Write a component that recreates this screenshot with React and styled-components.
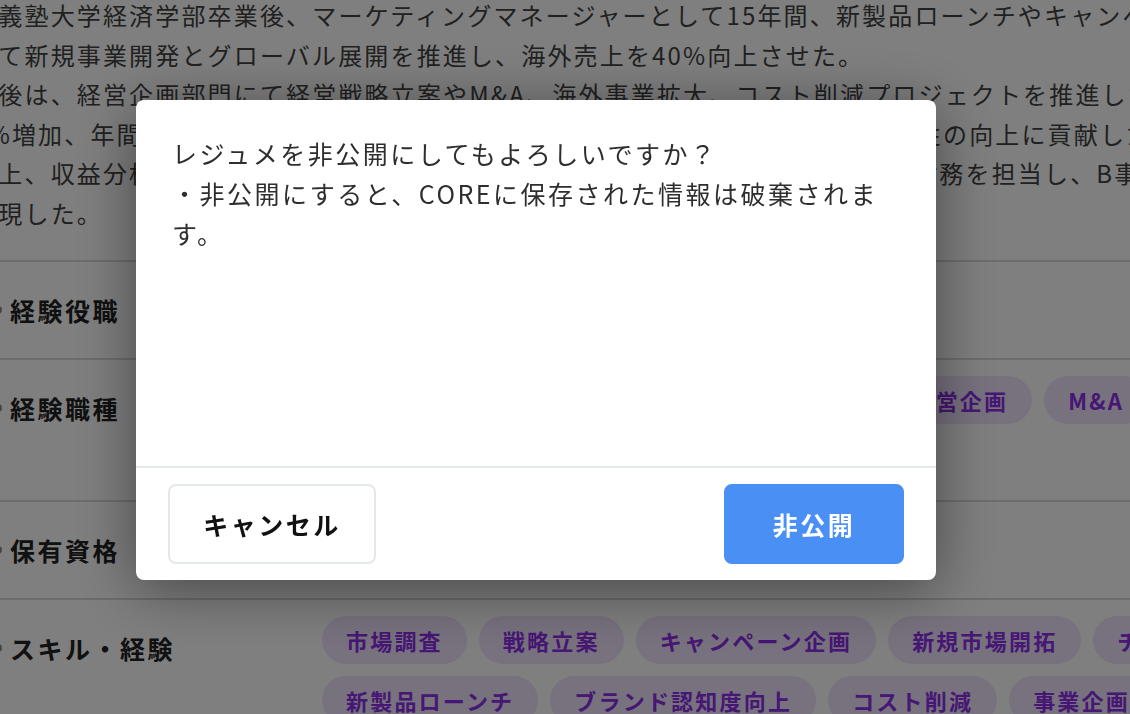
import React from "react";
import styled, { createGlobalStyle } from "styled-components";

const GlobalStyle = createGlobalStyle`
  html, body {
    margin: 0;
    padding: 0;
  }
  body {
    font-family: "Noto Sans CJK JP", "Noto Sans", sans-serif;
    background: #fff;
    color: #444;
    overflow: hidden;
  }
`;

const Page = styled.div`
  width: 100vw;
  height: 100vh;
  overflow: hidden;
`;

const Content = styled.div`
  width: 1500px;
  margin: -5px 0 0 -54px;
`;

const Summary = styled.p`
  margin: 0;
  padding-bottom: 27px;
  font-size: 24px;
  line-height: 39.6px;
  letter-spacing: 0.09em;
  white-space: nowrap;
  color: #424242;
`;

const Row = styled.section`
  display: grid;
  grid-template-columns: 376px 1060px;
  padding: 16px 0;
  border-top: 2px solid #d9d9d9;
`;

const LabelCell = styled.div`
  display: flex;
  align-items: center;
  gap: 8px;
  height: 64px;
  padding-left: 48px;
`;

const Dot = styled.span`
  width: 8px;
  height: 8px;
  border-radius: 50%;
  background: #8a8a8a;
`;

const Label = styled.h3`
  margin: 0;
  font-size: 25px;
  font-weight: 700;
  letter-spacing: 0.1em;
  color: #222;
`;

const Tags = styled.div`
  display: flex;
  flex-wrap: wrap;
  align-content: flex-start;
  gap: 12px;
`;

const Tag = styled.span`
  display: inline-flex;
  align-items: center;
  height: 48px;
  padding: 0 24px;
  border-radius: 24px;
  background: #efe4fc;
  color: #8c2ee8;
  font-size: 22px;
  font-weight: 700;
  letter-spacing: 0.1em;
  white-space: nowrap;
`;

const Overlay = styled.div`
  position: fixed;
  inset: 0;
  display: flex;
  align-items: flex-start;
  padding: 100px 0 0 136px;
  background: rgba(0, 0, 0, 0.5);
`;

const Modal = styled.div`
  display: flex;
  flex-direction: column;
  width: 800px;
  height: 480px;
  background: #fff;
  border-radius: 8px;
  box-shadow: 0 10px 60px rgba(0, 0, 0, 0.45);
  overflow: hidden;
`;

const ModalBody = styled.div`
  flex: 1;
  padding: 33px 36px;
  font-size: 25px;
  line-height: 40px;
  letter-spacing: 0.1em;
  color: #2e2e2e;
`;

const ModalFooter = styled.div`
  display: flex;
  justify-content: space-between;
  align-items: center;
  padding: 16px 32px;
  border-top: 2px solid #e3e8ee;
`;

const Button = styled.button`
  height: 80px;
  width: ${(p) => (p.$primary ? "180px" : "208px")};
  border-radius: 8px;
  border: 2px solid ${(p) => (p.$primary ? "#4a90f4" : "#e3e8ee")};
  background: ${(p) => (p.$primary ? "#4a90f4" : "#fff")};
  color: ${(p) => (p.$primary ? "#fff" : "#111")};
  font-family: inherit;
  font-size: 25px;
  font-weight: 700;
  letter-spacing: 0.1em;
  cursor: pointer;
`;

const summaryLines = [
  "慶應義塾大学経済学部卒業後、マーケティングマネージャーとして15年間、新製品ローンチやキャンペーン企画を担当。",
  "社にて新規事業開発とグローバル展開を推進し、海外売上を40%向上させた。",
  "その後は、経営企画部門にて経営戦略立案やM&A、海外事業拡大、コスト削減プロジェクトを推進した。",
  "を5%増加、年間コスト2億円の削減を達成。業務効率化を推進し、組織全体の生産性の向上に貢献した。",
  "率向上、収益分析の仕組みを構築した。さらに、子会社の経営管理や予算策定等の財務を担当し、B事業の黒字化",
  "を実現した。",
];

const rows = [
  { label: "経験役職", tags: [] },
  {
    label: "経験職種",
    tags: ["マーケティング", "事業開発", "広報・宣伝", "経営企画", "M&A", "海外事業", "予算管理"],
  },
  { label: "保有資格", tags: [] },
  {
    label: "スキル・経験",
    tags: [
      "市場調査",
      "戦略立案",
      "キャンペーン企画",
      "新規市場開拓",
      "チームマネジメント",
      "新製品ローンチ",
      "ブランド認知度向上",
      "コスト削減",
      "事業企画",
    ],
  },
];

export default function App() {
  return (
    <>
      <GlobalStyle />
      <Page>
        <Content>
          <Summary>
            {summaryLines.map((line, i) => (
              <React.Fragment key={i}>
                {line}
                {i < summaryLines.length - 1 && <br />}
              </React.Fragment>
            ))}
          </Summary>
          {rows.map((row) => (
            <Row key={row.label}>
              <LabelCell>
                <Dot />
                <Label>{row.label}</Label>
              </LabelCell>
              <Tags>
                {row.tags.map((t) => (
                  <Tag key={t}>{t}</Tag>
                ))}
              </Tags>
            </Row>
          ))}
        </Content>
      </Page>
      <Overlay>
        <Modal role="dialog">
          <ModalBody>
            レジュメを非公開にしてもよろしいですか？
            <br />
            ・非公開にすると、COREに保存された情報は破棄されます。
          </ModalBody>
          <ModalFooter>
            <Button>キャンセル</Button>
            <Button $primary>非公開</Button>
          </ModalFooter>
        </Modal>
      </Overlay>
    </>
  );
}
